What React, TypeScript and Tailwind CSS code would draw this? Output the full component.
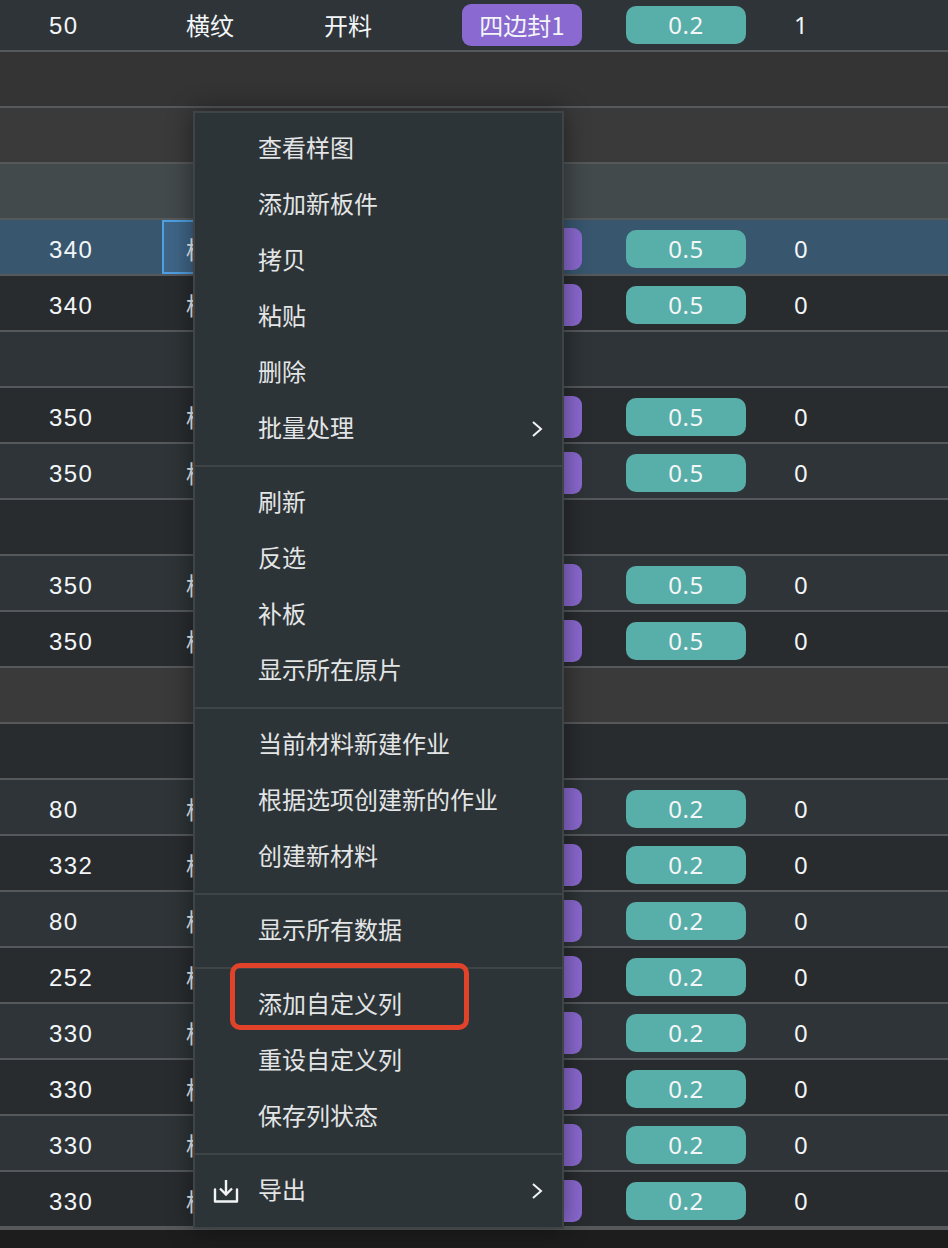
const cjk = "font-['Noto_Sans_CJK_SC','Noto_Sans',sans-serif]";

type Row = {
  bg: string;
  width?: string;
  edge?: string;
  active?: boolean;
};

const ALT = "bg-[#2e3437]";
const DARK = "bg-[#292c2f]";

const rows: Row[] = [
  { bg: ALT, width: "50", edge: "0.2" },
  { bg: "bg-[#343434]" },
  { bg: "bg-[#3a3a3a]" },
  { bg: "bg-[#434a4c]" },
  { bg: "bg-[#38566e]", width: "340", edge: "0.5", active: true },
  { bg: DARK, width: "340", edge: "0.5" },
  { bg: ALT },
  { bg: DARK, width: "350", edge: "0.5" },
  { bg: ALT, width: "350", edge: "0.5" },
  { bg: DARK },
  { bg: ALT, width: "350", edge: "0.5" },
  { bg: DARK, width: "350", edge: "0.5" },
  { bg: "bg-[#3a3a3a]" },
  { bg: DARK },
  { bg: ALT, width: "80", edge: "0.2" },
  { bg: DARK, width: "332", edge: "0.2" },
  { bg: ALT, width: "80", edge: "0.2" },
  { bg: DARK, width: "252", edge: "0.2" },
  { bg: ALT, width: "330", edge: "0.2" },
  { bg: DARK, width: "330", edge: "0.2" },
  { bg: ALT, width: "330", edge: "0.2" },
  { bg: DARK, width: "330", edge: "0.2" },
];

const menu: { label: string; sub?: boolean; icon?: boolean }[][] = [
  [
    { label: "查看样图" },
    { label: "添加新板件" },
    { label: "拷贝" },
    { label: "粘贴" },
    { label: "删除" },
    { label: "批量处理", sub: true },
  ],
  [{ label: "刷新" }, { label: "反选" }, { label: "补板" }, { label: "显示所在原片" }],
  [{ label: "当前材料新建作业" }, { label: "根据选项创建新的作业" }, { label: "创建新材料" }],
  [{ label: "显示所有数据" }],
  [{ label: "添加自定义列" }, { label: "重设自定义列" }, { label: "保存列状态" }],
  [{ label: "导出", sub: true, icon: true }],
];

function TableRow({ row, index }: { row: Row; index: number }) {
  // only the first row is clear of the context menu
  const covered = index > 0;
  return (
    <div
      className={`flex h-14 shrink-0 border-b-2 border-[#56595b] text-[24px] text-[#f3f6f8] ${row.bg}`}
    >
      {row.width && (
        <>
          <div className="flex w-[162px] items-center pl-[49px] pt-[6px] font-['Liberation_Sans',sans-serif] tracking-[1.4px]">
            {row.width}
          </div>
          <div
            className={`flex w-[138px] items-center pt-[4px] ${cjk} ${
              row.active
                ? "border-2 border-[#4f9fe3] bg-[#3f6587] pl-[22px]"
                : "pl-[24px]"
            }`}
          >
            横纹
          </div>
          <div className={`flex w-[138px] items-center pl-[24px] pt-[4px] ${cjk}`}>
            {!covered && "开料"}
          </div>
          <div className="flex w-[164px] items-center pl-[24px] pt-[4px]">
            <div
              className={`flex h-[42px] w-[120px] items-center justify-center rounded-[9px] bg-[#8a69d0] ${cjk}`}
            >
              {!covered && "四边封1"}
            </div>
          </div>
          <div className="flex w-[168px] items-center pl-[24px] pt-[4px]">
            <div className="flex h-[38px] w-[120px] items-center justify-center rounded-[10px] bg-[#58aea8] font-['Noto_Sans',sans-serif] tracking-[0.5px]">
              {row.edge}
            </div>
          </div>
          <div className="flex items-center pl-[24px] pt-[4px] font-['Noto_Sans',sans-serif]">
            {index === 0 ? "1" : "0"}
          </div>
        </>
      )}
    </div>
  );
}

function ExportIcon() {
  return (
    <svg
      width="26"
      height="26"
      viewBox="0 0 26 26"
      fill="none"
      stroke="#f1f3f4"
      strokeWidth="2.4"
      className="absolute left-[18px] top-1/2 -translate-y-1/2"
    >
      <path d="M13 2v14M7 10.5l6 6 6-6" />
      <path d="M2 11.5v12h22v-12" strokeLinejoin="round" strokeLinecap="round" />
    </svg>
  );
}

function ContextMenu() {
  return (
    <div
      className={`absolute left-[193px] top-[111px] w-[371px] border-2 border-[#3f4447] bg-[#2d3437] py-2 text-[24px] leading-none text-[#e3e5e6] shadow-[0_0_24px_rgba(0,0,0,0.45)] ${cjk}`}
    >
      {menu.map((group, i) => (
        <div key={i}>
          {i > 0 && <div className="my-2 h-[2px] bg-[#3f4447]" />}
          {group.map((item) => (
            <div key={item.label} className="relative flex h-14 items-center pb-[4px] pl-[63px]">
              {item.icon && <ExportIcon />}
              {item.label}
              {item.sub && (
                <svg
                  width="12"
                  height="18"
                  viewBox="0 0 12 18"
                  fill="none"
                  stroke="#f1f3f4"
                  strokeWidth="2"
                  className="absolute right-[19px] top-1/2 -translate-y-1/2"
                >
                  <path d="M2 2l8 7-8 7" />
                </svg>
              )}
            </div>
          ))}
        </div>
      ))}
    </div>
  );
}

export default function App() {
  return (
    <div className="relative flex h-[1248px] w-[948px] flex-col overflow-hidden bg-[#1d1d1d]">
      <div className="-mt-[4px] flex flex-col">
        {rows.map((row, i) => (
          <TableRow key={i} row={row} index={i} />
        ))}
      </div>
      <div className="h-[2px] shrink-0 bg-[#56595b]" />
      <ContextMenu />
      <div className="absolute left-[230px] top-[963px] h-[67px] w-[239px] rounded-[10px] border-[5px] border-[#e0432a]" />
    </div>
  );
}
